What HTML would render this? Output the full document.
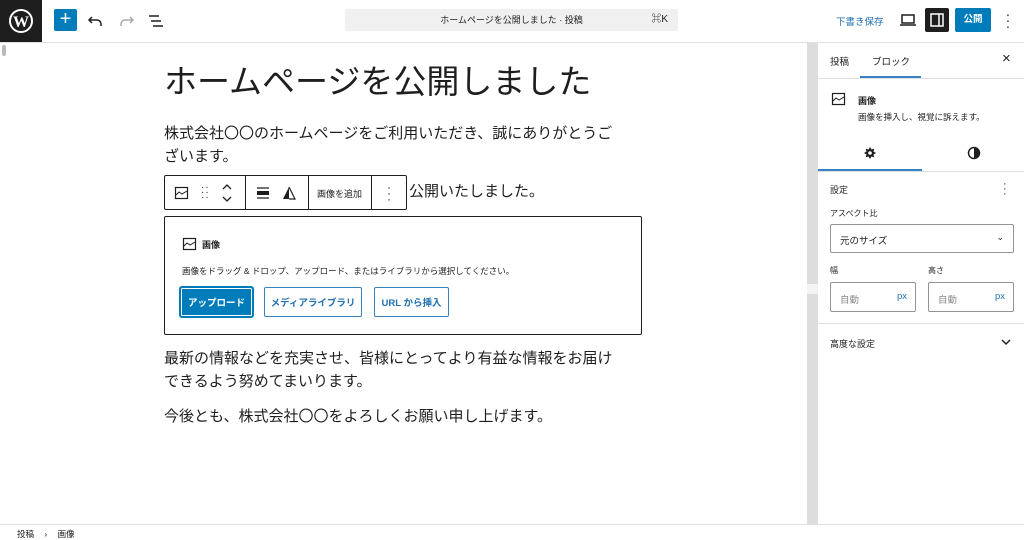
<!DOCTYPE html><html><head><meta charset="utf-8"><style>
*{margin:0;padding:0;box-sizing:border-box}
body{width:1024px;height:539px;overflow:hidden;background:#fff;font-family:"Liberation Sans","Noto Sans CJK JP",sans-serif;color:#1e1e1e;position:relative}
.a{position:absolute}
.top{left:0;top:0;width:1024px;height:43px;border-bottom:1px solid #e0e0e0}
.t{font-size:15px;line-height:23px;color:#1e1e1e}
.btn{position:absolute;border:1px solid #3582c4;color:#2271b1;font-size:9.5px;display:flex;align-items:center;justify-content:center;border-radius:2px;height:30px;top:287px;white-space:nowrap}
.inp{position:absolute;border:1px solid #949494;border-radius:2px;font-size:9.5px}
</style></head><body>
<div class="a top"></div>
<div class="a" style="left:0;top:0;width:42px;height:42px;background:#1e1e1e">
<svg width="42" height="42" viewBox="0 0 42 42"><circle cx="21" cy="21" r="11" fill="none" stroke="#fff" stroke-width="2"/><text x="21" y="27" text-anchor="middle" font-size="16" font-weight="bold" fill="#fff" font-family="Liberation Serif">W</text></svg></div>
<div class="a" style="left:54px;top:9px;width:23px;height:22px;background:#007cba;border-radius:2px;color:#fff;font-size:20px;line-height:21px;text-align:center">+</div>
<svg class="a" style="left:86px;top:11px" width="20" height="20" viewBox="0 0 20 20"><path d="M6 6l-3 3 3 3M3 9h8a4 4 0 0 1 4 4v2" fill="none" stroke="#1e1e1e" stroke-width="1.5"/></svg>
<svg class="a" style="left:116px;top:11px" width="20" height="20" viewBox="0 0 20 20"><path d="M14 6l3 3-3 3M17 9H9a4 4 0 0 0-4 4v2" fill="none" stroke="#aaa" stroke-width="1.5"/></svg>
<svg class="a" style="left:146px;top:11px" width="20" height="20" viewBox="0 0 20 20"><path d="M3 5h10M5 10h10M7 15h10" stroke="#1e1e1e" stroke-width="1.5"/></svg>
<div class="a" style="left:345px;top:9px;width:333px;height:22px;background:#f0f0f0;border-radius:2px;font-size:9px;line-height:22px;text-align:center">ホームページを公開しました · 投稿<span style="position:absolute;right:10px;font-size:10px">⌘K</span></div>
<div class="a" style="left:836px;top:14px;font-size:9.5px;color:#2271b1">下書き保存</div>
<svg class="a" style="left:899px;top:11px" width="18" height="18" viewBox="0 0 18 18"><rect x="3" y="4" width="12" height="8" fill="none" stroke="#1e1e1e" stroke-width="1.5"/><path d="M1 14h16" stroke="#1e1e1e" stroke-width="1.5"/></svg>
<div class="a" style="left:925px;top:8px;width:24px;height:24px;background:#1e1e1e;border-radius:2px"><svg width="24" height="24"><rect x="6" y="6" width="12" height="12" fill="none" stroke="#fff" stroke-width="1.5"/><path d="M14 6v12" stroke="#fff" stroke-width="1.5"/></svg></div>
<div class="a" style="left:955px;top:8px;width:36px;height:24px;background:#007cba;border-radius:2px;color:#fff;font-size:9.5px;line-height:24px;text-align:center;font-weight:bold">公開</div>
<div class="a" style="left:1005px;top:11px;font-size:14px;line-height:6px;width:6px;text-align:center">·<br>·<br>·</div>
<div class="a" style="left:807px;top:43px;width:11px;height:481px;background:#ddd"></div>
<div class="a" style="left:807px;top:284px;width:11px;height:10px;background:#f4f4f4"></div>
<div class="a" style="left:2px;top:45px;width:4px;height:11px;background:#bbb;border-radius:2px"></div>
<div class="a" style="left:164px;top:60px;font-size:33px;line-height:44px">ホームページを公開しました</div>
<div class="a t" style="left:164px;top:122px;width:460px">株式会社〇〇のホームページをご利用いただき、誠にありがとうございます。</div>
<div class="a t" style="left:409px;top:180px">公開いたしました。</div>
<div class="a" style="left:164px;top:175px;width:243px;height:35px;border:1px solid #1e1e1e;border-radius:2px;background:#fff">
<div class="a" style="left:80px;top:0;width:1px;height:33px;background:#1e1e1e"></div>
<div class="a" style="left:143px;top:0;width:1px;height:33px;background:#1e1e1e"></div>
<div class="a" style="left:206px;top:0;width:1px;height:33px;background:#1e1e1e"></div>
<svg class="a" style="left:9px;top:9px" width="16" height="16"><rect x="1.5" y="2.5" width="12" height="11" fill="none" stroke="#1e1e1e" stroke-width="1.2"/><path d="M2 10l3-3 3 2 5-3" fill="none" stroke="#1e1e1e" stroke-width="1"/></svg>
<div class="a" style="left:36px;top:9px;font-size:10px;line-height:5px;letter-spacing:1px">··<br>··<br>··</div>
<svg class="a" style="left:55px;top:6px" width="14" height="22"><path d="M3 7l4-4 4 4M3 15l4 4 4-4" fill="none" stroke="#1e1e1e" stroke-width="1.3"/></svg>
<svg class="a" style="left:90px;top:9px" width="16" height="16"><path d="M2 3h12M2 13h12" stroke="#1e1e1e" stroke-width="1.3"/><rect x="2" y="6" width="12" height="4" fill="#1e1e1e"/></svg>
<svg class="a" style="left:116px;top:9px" width="16" height="16"><path d="M8 2L2 14h6z" fill="#1e1e1e"/><path d="M8 2l6 12H8" fill="none" stroke="#1e1e1e" stroke-width="1.2"/></svg>
<div class="a" style="left:152px;top:11px;font-size:9px">画像を追加</div>
<div class="a" style="left:222px;top:8px;font-size:12px;line-height:6px">·<br>·<br>·</div>
</div>
<div class="a" style="left:164px;top:216px;width:478px;height:119px;border:1px solid #1e1e1e;border-radius:2px">
<svg class="a" style="left:17px;top:19px" width="16" height="16"><rect x="1.5" y="2.5" width="12" height="11" fill="none" stroke="#1e1e1e" stroke-width="1.2"/><path d="M2 10l3-3 3 2 5-3" fill="none" stroke="#1e1e1e" stroke-width="1"/></svg>
<div class="a" style="left:37px;top:21px;font-size:9px;font-weight:bold">画像</div>
<div class="a" style="left:17px;top:48px;font-size:8.5px">画像をドラッグ &amp; ドロップ、アップロード、またはライブラリから選択してください。</div>
</div>
<div class="btn" style="left:180px;width:73px;background:#007cba;color:#fff;border-color:#007cba;box-shadow:0 0 0 1px #fff inset, 0 0 0 1px #007cba;font-weight:bold">アップロード</div>
<div class="btn" style="left:264px;width:98px;font-weight:bold">メディアライブラリ</div>
<div class="btn" style="left:374px;width:75px;font-weight:bold">URL から挿入</div>
<div class="a t" style="left:164px;top:347px;width:460px">最新の情報などを充実させ、皆様にとってより有益な情報をお届けできるよう努めてまいります。</div>
<div class="a t" style="left:164px;top:405px">今後とも、株式会社〇〇をよろしくお願い申し上げます。</div>
<div class="a" style="left:818px;top:43px;width:206px;height:481px;background:#fff">
<div class="a" style="left:12px;top:11px;font-size:9.5px">投稿</div>
<div class="a" style="left:54px;top:11px;font-size:9.5px">ブロック</div>
<div class="a" style="left:42px;top:33px;width:61px;height:2px;background:#3582c4"></div>
<div class="a" style="left:184px;top:7px;font-size:15px">×</div>
<div class="a" style="left:0;top:35px;width:206px;height:1px;background:#e0e0e0"></div>
<svg class="a" style="left:13px;top:48px" width="16" height="16"><rect x="1.5" y="2.5" width="12" height="11" fill="none" stroke="#1e1e1e" stroke-width="1.2"/><path d="M2 10l3-3 3 2 5-3" fill="none" stroke="#1e1e1e" stroke-width="1"/></svg>
<div class="a" style="left:40px;top:51px;font-size:9px;font-weight:bold">画像</div>
<div class="a" style="left:40px;top:68px;font-size:8.5px">画像を挿入し、視覚に訴えます。</div>
<svg class="a" style="left:45px;top:103px" width="14" height="14" viewBox="0 0 14 14"><path d="M7 1l1.5 2.5 2.8-.8-.8 2.8L13 7l-2.5 1.5.8 2.8-2.8-.8L7 13l-1.5-2.5-2.8.8.8-2.8L1 7l2.5-1.5-.8-2.8 2.8.8z" fill="#1e1e1e"/><circle cx="7" cy="7" r="1.8" fill="#fff"/></svg>
<svg class="a" style="left:149px;top:103px" width="14" height="14"><circle cx="7" cy="7" r="5.5" fill="none" stroke="#1e1e1e" stroke-width="1.5"/><path d="M7 1.5a5.5 5.5 0 0 1 0 11z" fill="#1e1e1e"/></svg>
<div class="a" style="left:0;top:126px;width:104px;height:2px;background:#3582c4"></div>
<div class="a" style="left:0;top:128px;width:206px;height:1px;background:#e0e0e0"></div>
<div class="a" style="left:12px;top:140px;font-size:9px">設定</div>
<div class="a" style="left:185px;top:139px;font-size:11px;line-height:5px">·<br>·<br>·</div>
<div class="a" style="left:12px;top:165px;font-size:8px">アスペクト比</div>
<div class="inp" style="left:12px;top:181px;width:184px;height:29px"><span class="a" style="left:9px;top:8px">元のサイズ</span><span class="a" style="right:9px;top:7px;font-size:9px">⌄</span></div>
<div class="a" style="left:12px;top:222px;font-size:8px">幅</div>
<div class="a" style="left:110px;top:222px;font-size:8px">高さ</div>
<div class="inp" style="left:12px;top:239px;width:86px;height:30px"><span class="a" style="left:9px;top:9px;color:#888">自動</span><span class="a" style="right:8px;top:8px;color:#2271b1">px</span></div>
<div class="inp" style="left:110px;top:239px;width:86px;height:30px"><span class="a" style="left:9px;top:9px;color:#888">自動</span><span class="a" style="right:8px;top:8px;color:#2271b1">px</span></div>
<div class="a" style="left:0;top:280px;width:206px;height:1px;background:#e0e0e0"></div>
<div class="a" style="left:12px;top:294px;font-size:9px">高度な設定</div>
<svg class="a" style="left:182px;top:294px" width="12" height="10"><path d="M2 3l4 4 4-4" fill="none" stroke="#1e1e1e" stroke-width="1.5"/></svg>
</div>
<div class="a" style="left:0;top:524px;width:1024px;height:1px;background:#e0e0e0"></div>
<div class="a" style="left:17px;top:528px;font-size:8.5px">投稿 <span style="margin:0 8px">›</span> 画像</div>
</body></html>
